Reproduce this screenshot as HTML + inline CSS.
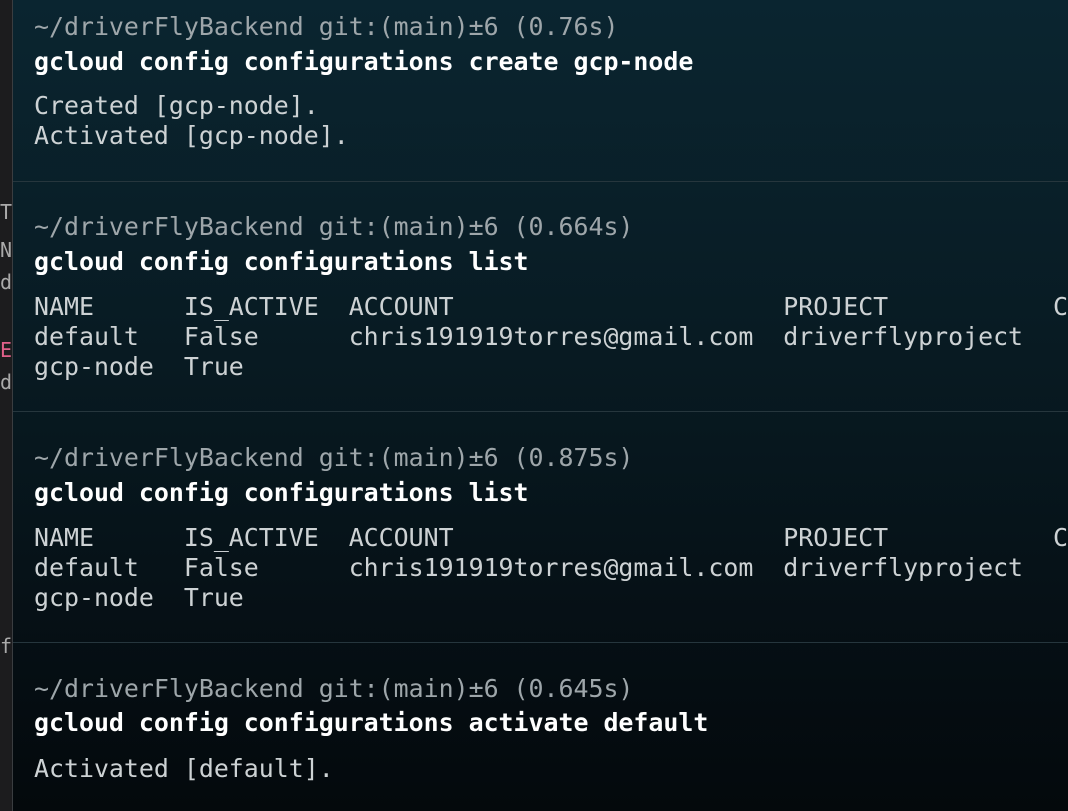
<!DOCTYPE html>
<html><head><meta charset="utf-8"><style>
html,body{margin:0;padding:0;width:1068px;height:811px;overflow:hidden}
body{background:#1c1c1e;position:relative;font-family:"DejaVu Sans Mono","Liberation Mono",monospace}
#term{position:absolute;left:12px;top:0;width:1056px;height:811px;border-left:1px solid #3a3d40;
background:linear-gradient(180deg,#0a2530 0%,#091e27 30%,#07171e 55%,#050d12 85%,#04090c 100%)}
.l{position:absolute;left:21px;font-size:24.9px;line-height:30px;white-space:pre;color:#cdd2d4}
.p{color:#9ea6aa}
.c{color:#fff;font-weight:bold}
.s{position:absolute;left:0;right:0;height:1px;background:#26363d}
.side{position:absolute;left:0;width:12px;font-size:20px;color:#aaa;font-family:"DejaVu Sans Mono",monospace;overflow:hidden;white-space:pre}
</style></head><body>
<div class="side" style="top:200px">T</div>
<div class="side" style="top:238px">NA</div>
<div class="side" style="top:270px">de</div>
<div class="side" style="top:338px;color:#e0608a">ER</div>
<div class="side" style="top:370px">da</div>
<div class="side" style="top:634px">fo</div>
<div id="term">
<div class="l p" style="top:12px">~/driverFlyBackend git:(main)±6 (0.76s)</div>
<div class="l c" style="top:47px">gcloud config configurations create gcp-node</div>
<div class="l" style="top:91px">Created [gcp-node].
Activated [gcp-node].</div>
<div class="s" style="top:181px"></div>
<div class="l p" style="top:212px">~/driverFlyBackend git:(main)±6 (0.664s)</div>
<div class="l c" style="top:247px">gcloud config configurations list</div>
<div class="l" style="top:292px">NAME      IS_ACTIVE  ACCOUNT                      PROJECT           C
default   False      chris191919torres@gmail.com  driverflyproject
gcp-node  True</div>
<div class="s" style="top:411px"></div>
<div class="l p" style="top:443px">~/driverFlyBackend git:(main)±6 (0.875s)</div>
<div class="l c" style="top:478px">gcloud config configurations list</div>
<div class="l" style="top:523px">NAME      IS_ACTIVE  ACCOUNT                      PROJECT           C
default   False      chris191919torres@gmail.com  driverflyproject
gcp-node  True</div>
<div class="s" style="top:642px"></div>
<div class="l p" style="top:674px">~/driverFlyBackend git:(main)±6 (0.645s)</div>
<div class="l c" style="top:708px">gcloud config configurations activate default</div>
<div class="l" style="top:754px">Activated [default].</div>
</div>
</body></html>
